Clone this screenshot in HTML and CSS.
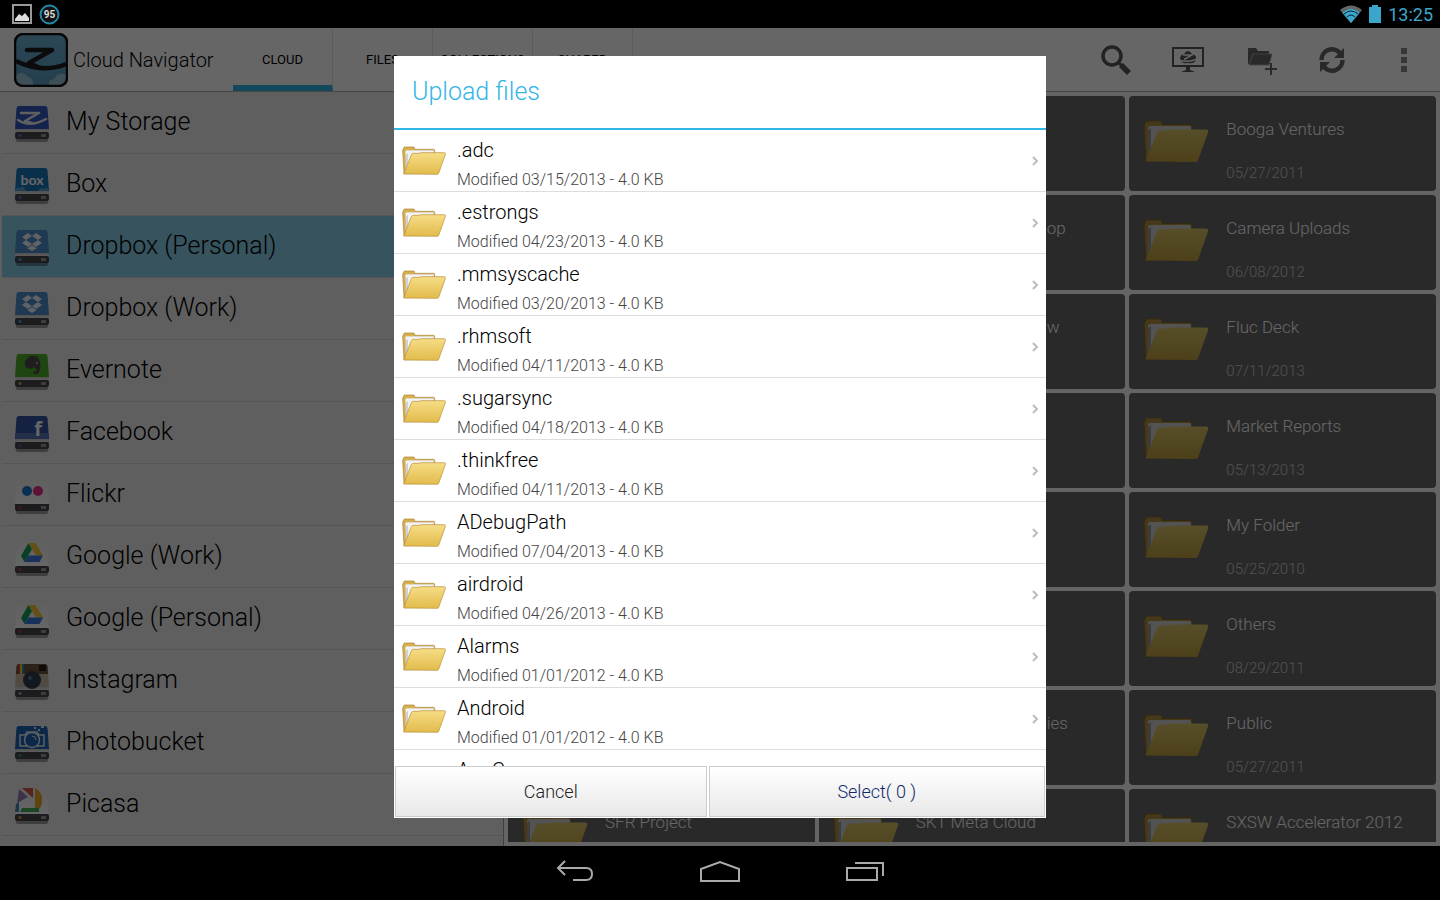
FILE: index.html
```
<!DOCTYPE html>
<html lang="en">
<head>
    <meta charset="utf-8">
    <title>Cloud Navigator</title>
    <link rel="stylesheet" href="styles.css">
</head>
<body>
    <!-- shared icons -->
    <svg class="defs" aria-hidden="true">
        <defs>
            <linearGradient id="gold" x1="0" y1="0" x2="0" y2="1">
                <stop offset="0" stop-color="#f6dd85"/>
                <stop offset="1" stop-color="#e2bb4c"/>
            </linearGradient>
            <linearGradient id="goldDeep" x1="0" y1="0" x2="0" y2="1">
                <stop offset="0" stop-color="#d8c468"/>
                <stop offset="1" stop-color="#c0a040"/>
            </linearGradient>
            <linearGradient id="appSky" x1="0" y1="0" x2="0" y2="1">
                <stop offset="0" stop-color="#6cb0d4"/>
                <stop offset="1" stop-color="#5a9cc0"/>
            </linearGradient>
            <linearGradient id="plate" x1="0" y1="0" x2="0" y2="1">
                <stop offset="0" stop-color="#bbb"/>
                <stop offset="1" stop-color="#f4f4f4"/>
            </linearGradient>
            <linearGradient id="white" x1="0" y1="0" x2="0" y2="1">
                <stop offset="0" stop-color="#eee"/>
                <stop offset="1" stop-color="#fff"/>
            </linearGradient>
            <symbol id="folder" viewBox="0 0 66 44">
                <path d="M1 6 L3 1.500 Q3.500 1 4.500 1 H17 Q19 1 19 3 V4.500 H47 Q49 4.500 49 6.500 V12 L12 41 H3 Z" fill="#d6ae4c" stroke="#a98432" stroke-width="1"/>
                <path d="M5 8 Q5 6 7 6 H46 Q48 6 48 8 V14 L7 38 Z" fill="#f4f4f6" stroke="#c9c3b4" stroke-width=".6"/>
                <path d="M6 12 L9 10 V30 L5 40 Z" fill="#cfcfd6"/>
                <path d="M2.500 41.500 L14 12.500 Q15 10.500 17 10.500 H26 L28 9.500 H63 Q66 9.500 65 12.500 L55 40.500 Q54.500 42 53 42 Z" fill="url(#gold)" stroke="#b58d35" stroke-width="1"/>
            </symbol>
            <symbol id="folderTile" viewBox="0 0 66 44">
                <path d="M1 6 L3 1.500 Q3.500 1 4.500 1 H17 Q19 1 19 3 V4.500 H47 Q49 4.500 49 6.500 V12 L12 41 H3 Z" fill="#b09040" stroke="#80662a" stroke-width="1"/>
                <path d="M5 8 Q5 6 7 6 H46 Q48 6 48 8 V14 L7 38 Z" fill="#cfcfd2"/>
                <path d="M5 10 L8 8 V30 L5 38 Z" fill="#98989c"/>
                <path d="M2.500 41.500 L14 12.500 Q15 10.500 17 10.500 H26 L28 9.500 H63 Q66 9.500 65 12.500 L55 40.500 Q54.500 42 53 42 Z" fill="url(#goldDeep)"/>
            </symbol>
            <symbol id="base" viewBox="0 0 36 40">
                <rect x="2" y="32" width="32" height="5" rx="2" fill="#000" opacity=".35"/>
                <path d="M1 22 H35 V29 H1 Z" fill="url(#plate)"/>
                <rect x="1" y="27" width="34" height="7" rx="2" fill="#48484c"/>
                <rect x="27" y="29" width="5" height="3" fill="#999"/>
                <circle cx="6" cy="30.500" r="1.500" fill="currentColor"/>
            </symbol>
            <symbol id="cover" viewBox="0 0 36 40">
                <path d="M5 1 H31 Q33 1 33.500 3 L35 24 H1 L2.500 3 Q3 1 5 1 Z" fill="currentColor"/>
            </symbol>
            <symbol id="coverWhite" viewBox="0 0 36 40">
                <path d="M5 1 H31 Q33 1 33.500 3 L35 27 H1 L2.500 3 Q3 1 5 1 Z" fill="url(#white)"/>
            </symbol>
            <symbol id="chevron" viewBox="0 0 8 10">
                <path d="M2 1 L6 5 L2 9" fill="none" stroke="#bcbcbc" stroke-width="2"/>
            </symbol>
            <symbol id="dropboxMark" viewBox="0 0 20 18">
                <path d="M6 0 L10 3 L4 7 L0 4 Z M14 0 L20 4 L16 7 L10 3 Z M0 10 L4 7 L10 11 L6 14 Z M20 10 L16 7 L10 11 L14 14 Z M4 14.500 L6 15 L10 12 L14 15 L16 14.500 L10 18 Z" fill="#f2f6fa"/>
            </symbol>
            <symbol id="driveMark" viewBox="0 0 22 19">
                <path d="M7.500 0 L0 13 L3.500 19 L11 6 Z" fill="#18a05c"/>
                <path d="M7.500 0 H14.500 L22 12.500 H15 Z" fill="#fbc934"/>
                <path d="M7.500 12.500 H22 L18.500 19 H3.500 Z" fill="#3b78e7"/>
            </symbol>
        </defs>
    </svg>

    <div class="statusbar">
        <svg width="20" height="20" viewBox="0 0 20 20">
            <rect x="1" y="1" width="18" height="18" fill="none" stroke="#999" stroke-width="2"/>
            <path d="M3 15 L7 10 L10 12 L13 9 L17 14 V17 H3 Z" fill="#ddd"/>
        </svg>
        <svg width="21" height="21" viewBox="0 0 21 21">
            <circle cx="10.500" cy="10.500" r="9" fill="#111" stroke="#2389a8" stroke-width="2"/>
            <text x="10.500" y="14" text-anchor="middle" class="badge-text">95</text>
        </svg>
        <svg class="wifi" width="22" height="18" viewBox="0 0 22 18">
            <path d="M11 18 L0 5 Q11 -4 22 5 Z" fill="#666"/>
            <path d="M11 18 L2.500 8 Q11 0 19.500 8 Z" fill="#3ba6cc"/>
            <path d="M4 9 Q11 3 18 9 M7 12 Q11 8 15 12" fill="none" stroke="#123" stroke-width="1"/>
        </svg>
        <svg width="12" height="18" viewBox="0 0 12 18">
            <path d="M3 0 H9 V2 H12 V18 H0 V2 H3 Z" fill="#3ba6cc"/>
        </svg>
        <span class="clock">13:25</span>
    </div>

    <main class="app">
        <header class="actionbar">
            <svg class="logo" width="54" height="54" viewBox="0 0 54 54">
                <rect x="1" y="1" width="52" height="52" rx="8" fill="url(#appSky)"/>
                <path d="M2 52 V42 Q9 37 14 44 Q19 44 19 52 Z M35 52 Q34 46 40 46 Q44 38 52 42 V52 Z" fill="#9fc6da"/>
                <path d="M2 28 Q14 34 27 35 Q41 36 52 31" fill="none" stroke="#1c1c20" stroke-width="4.500"/>
                <path d="M13 17 H38 L15 30 L26 35" fill="none" stroke="#1c1c20" stroke-width="4.500" stroke-linecap="round" stroke-linejoin="round"/>
                <rect x="1" y="1" width="52" height="52" rx="8" fill="none" stroke="#111" stroke-width="2.500"/>
            </svg>
            <h1>Cloud Navigator</h1>
            <nav class="tabs">
                <a href="#" class="active">CLOUD</a>
                <a href="#">FILES</a>
                <a href="#">COLLECTIONS</a>
                <a href="#">SHARED</a>
            </nav>
            <div class="actions">
                <button type="button" aria-label="Search">
                    <svg width="32" height="32" viewBox="0 0 32 32">
                        <circle cx="12" cy="12" r="9" fill="none" stroke="#555" stroke-width="3.500"/>
                        <path d="M18 18 L22 22" stroke="#555" stroke-width="3"/>
                        <path d="M21 21 L29 29" stroke="#555" stroke-width="5.500"/>
                    </svg>
                </button>
                <button type="button" aria-label="Remote screen">
                    <svg width="32" height="28" viewBox="0 0 32 28">
                        <path d="M1 2 H31 V20 H1 Z" fill="none" stroke="#555" stroke-width="2"/>
                        <path d="M14 21 H18 V24 L23 26 H9 L14 24 Z" fill="#555"/>
                        <path d="M8 13 Q8 9 12 8 Q16 2 20 8 Q25 9 24 14 Q22 18 16 17 Q9 18 8 13 Z" fill="#555"/>
                        <path d="M11 9 H20 L12 13.500 M7 14 Q16 17 25 13" fill="none" stroke="#fff" stroke-width="1.500"/>
                    </svg>
                </button>
                <button type="button" aria-label="New folder">
                    <svg width="34" height="32" viewBox="-3 0 34 32">
                        <path d="M2 20 V4 H10 L12 7 H23 V10 H7 L3 20 Z" fill="#666"/>
                        <path d="M7 10 H26 L23 21 H3 Z" fill="#666" stroke="#aaa" stroke-width=".8"/>
                        <path d="M25 19 V31 M19 25 H31" stroke="#666" stroke-width="2"/>
                    </svg>
                </button>
                <button type="button" aria-label="Refresh">
                    <svg width="28" height="28" viewBox="0 0 28 28">
                        <path d="M3.500 14 A10.500 10.500 0 0 1 22 7 M24.500 14 A10.500 10.500 0 0 1 6 21" fill="none" stroke="#666" stroke-width="4.500"/>
                        <path d="M26 2 V12 H16 Z M2 26 V16 H12 Z" fill="#666"/>
                    </svg>
                </button>
                <button type="button" aria-label="More options">
                    <svg width="6" height="24" viewBox="0 0 6 24">
                        <path d="M0 0 H6 V6 H0 Z M0 9 H6 V15 H0 Z M0 18 H6 V24 H0 Z" fill="#888"/>
                    </svg>
                </button>
            </div>
        </header>

        <div class="content">
            <ul class="drives">
                <li><a href="#">
                    <svg width="36" height="40" viewBox="0 0 36 40">
                        <use href="#base" color="#4a78d8"/><use href="#cover" color="#3457c4"/>
                        <path d="M7 8 H25 L11 16 L18 18 M4 15 Q16 23 32 14" fill="none" stroke="#eee" stroke-width="2.500" stroke-linecap="round" stroke-linejoin="round"/>
                    </svg>My Storage</a></li>
                <li><a href="#">
                    <svg width="36" height="40" viewBox="0 0 36 40">
                        <use href="#base" color="#4a78d8"/><use href="#cover" color="#1b76b8"/>
                        <path d="M1 24 Q2 19 6 21 Q9 17 12 24 Z M24 24 Q27 19 30 22 Q33 18 35 24 Z" fill="#58a4d4"/>
                        <text x="18" y="18" text-anchor="middle" class="box-text">box</text>
                    </svg>Box</a></li>
                <li class="selected"><a href="#">
                    <svg width="36" height="40" viewBox="0 0 36 40">
                        <use href="#base" color="#5a9ce0"/><use href="#cover" color="#4d8ecb"/>
                        <use href="#dropboxMark" x="8" y="4" width="20" height="18"/>
                    </svg>Dropbox (Personal)</a></li>
                <li><a href="#">
                    <svg width="36" height="40" viewBox="0 0 36 40">
                        <use href="#base" color="#5a9ce0"/><use href="#cover" color="#4d8ecb"/>
                        <use href="#dropboxMark" x="8" y="4" width="20" height="18"/>
                    </svg>Dropbox (Work)</a></li>
                <li><a href="#">
                    <svg width="36" height="40" viewBox="0 0 36 40">
                        <use href="#base" color="#b8b840"/><use href="#cover" color="#4fae2c"/>
                        <path d="M11 8 L16 3 Q23 2 25 6 Q28 12 25 19 Q24 22 21 21 Q18 20 20 18 L22 19 Q23 15 20 14 Q18 17 13 15 Q10 13 11 8 Z" fill="#4c4c4c"/>
                        <circle cx="23" cy="10" r="1" fill="#bbb"/>
                    </svg>Evernote</a></li>
                <li><a href="#">
                    <svg width="36" height="40" viewBox="0 0 36 40">
                        <use href="#base" color="#3a68b8"/><use href="#cover" color="#3454a4"/>
                        <path d="M1.500 18 H34.500 L35 24 H1 Z" fill="#5874b8"/>
                        <text x="24" y="21" text-anchor="middle" class="fb-text">f</text>
                    </svg>Facebook</a></li>
                <li><a href="#">
                    <svg width="36" height="40" viewBox="0 0 36 40">
                        <use href="#base" color="#d03050"/><use href="#coverWhite"/>
                        <rect x="1" y="27" width="34" height="2" fill="#48484c"/>
                        <circle cx="13" cy="14" r="5" fill="#1878c8"/>
                        <circle cx="24" cy="14" r="5" fill="#e8308c"/>
                    </svg>Flickr</a></li>
                <li><a href="#">
                    <svg width="36" height="40" viewBox="0 0 36 40">
                        <use href="#base" color="#c83848"/><use href="#coverWhite"/>
                        <use href="#driveMark" x="7" y="4" width="22" height="19"/>
                    </svg>Google (Work)</a></li>
                <li><a href="#">
                    <svg width="36" height="40" viewBox="0 0 36 40">
                        <use href="#base" color="#c83848"/><use href="#coverWhite"/>
                        <use href="#driveMark" x="7" y="4" width="22" height="19"/>
                    </svg>Google (Personal)</a></li>
                <li><a href="#">
                    <svg width="36" height="40" viewBox="0 0 36 40">
                        <use href="#base" color="#aaa"/><use href="#cover" color="#c9bba8"/>
                        <path d="M5 1 H31 Q33 1 33.500 3 L34 11 H2 L2.500 3 Q3 1 5 1 Z" fill="#6f5141"/>
                        <path d="M4 1 H6 V11 H4 Z" fill="#c33"/><path d="M6 1 H8 V11 H6 Z" fill="#dc3"/><path d="M8 1 H10 V11 H8 Z" fill="#38a"/>
                        <rect x="25" y="2" width="7" height="6" rx="1" fill="#2a1c1c"/>
                        <circle cx="18" cy="17" r="9" fill="#333a44"/>
                        <circle cx="18" cy="17" r="5" fill="#26405a"/>
                        <circle cx="16" cy="15" r="2" fill="#607890"/>
                    </svg>Instagram</a></li>
                <li><a href="#">
                    <svg width="36" height="40" viewBox="0 0 36 40">
                        <use href="#base" color="#38906a"/><use href="#cover" color="#1c64b4"/>
                        <path d="M6 10 H11 L13 7 H23 L25 10 H30 V21 H6 Z" fill="none" stroke="#e8eef6" stroke-width="1.500"/>
                        <circle cx="18" cy="15" r="7.500" fill="#1c64b4" stroke="#e8eef6" stroke-width="1.500"/>
                        <path d="M18 11 Q22 11 22 15" fill="none" stroke="#e8eef6" stroke-width="1"/>
                        <path d="M20 2 H22 V4 H20 Z M27 1 H30 V3 H27 Z M24 4 H26 V6 H24 Z" fill="#e8eef6"/>
                    </svg>Photobucket</a></li>
                <li><a href="#">
                    <svg width="36" height="40" viewBox="0 0 36 40">
                        <use href="#base" color="#d0a030"/><use href="#coverWhite"/>
                        <path d="M8 1 H19 V11 Z" fill="#d4584c"/>
                        <path d="M5 2 L14 10 L3 16 Z" fill="#9a80b4"/>
                        <path d="M21 1 Q29 5 28 14 Q28 20 23 24 L21 20 Z" fill="#eda828"/>
                        <path d="M6 25 L8 21 H25 V25 Z" fill="#3fae58"/>
                        <path d="M2 17 L5 15 V25 H1 Z" fill="#4088b8"/>
                    </svg>Picasa</a></li>
                <li></li>
            </ul>

            <!-- three columns, row by row -->
            <div class="tiles">
                <div class="tile"></div>
                <div class="tile"></div>
                <a href="#" class="tile"><svg><use href="#folderTile"/></svg><span class="name">Booga Ventures</span><span class="date">05/27/2011</span></a>
                <div class="tile"></div>
                <a href="#" class="tile tail"><span class="name">op</span></a>
                <a href="#" class="tile"><svg><use href="#folderTile"/></svg><span class="name">Camera Uploads</span><span class="date">06/08/2012</span></a>
                <div class="tile"></div>
                <a href="#" class="tile tail"><span class="name">w</span></a>
                <a href="#" class="tile"><svg><use href="#folderTile"/></svg><span class="name">Fluc Deck</span><span class="date">07/11/2013</span></a>
                <div class="tile"></div>
                <div class="tile"></div>
                <a href="#" class="tile"><svg><use href="#folderTile"/></svg><span class="name">Market Reports</span><span class="date">05/13/2013</span></a>
                <div class="tile"></div>
                <div class="tile"></div>
                <a href="#" class="tile"><svg><use href="#folderTile"/></svg><span class="name">My Folder</span><span class="date">05/25/2010</span></a>
                <div class="tile"></div>
                <div class="tile"></div>
                <a href="#" class="tile"><svg><use href="#folderTile"/></svg><span class="name">Others</span><span class="date">08/29/2011</span></a>
                <div class="tile"></div>
                <a href="#" class="tile tail"><span class="name">ies</span></a>
                <a href="#" class="tile"><svg><use href="#folderTile"/></svg><span class="name">Public</span><span class="date">05/27/2011</span></a>
                <a href="#" class="tile"><svg><use href="#folderTile"/></svg><span class="name">SFR Project</span></a>
                <a href="#" class="tile"><svg><use href="#folderTile"/></svg><span class="name">SKT Meta Cloud</span></a>
                <a href="#" class="tile"><svg><use href="#folderTile"/></svg><span class="name">SXSW Accelerator 2012</span></a>
            </div>
        </div>

        <div class="scrim">
            <div class="dialog" role="dialog" aria-labelledby="dialog-title">
                <h2 id="dialog-title">Upload files</h2>
                <ul class="files">
                    <li><a href="#"><svg class="folder"><use href="#folder"/></svg><span class="info"><b>.adc</b><small>Modified 03/15/2013 - 4.0 KB</small></span><svg class="chevron"><use href="#chevron"/></svg></a></li>
                    <li><a href="#"><svg class="folder"><use href="#folder"/></svg><span class="info"><b>.estrongs</b><small>Modified 04/23/2013 - 4.0 KB</small></span><svg class="chevron"><use href="#chevron"/></svg></a></li>
                    <li><a href="#"><svg class="folder"><use href="#folder"/></svg><span class="info"><b>.mmsyscache</b><small>Modified 03/20/2013 - 4.0 KB</small></span><svg class="chevron"><use href="#chevron"/></svg></a></li>
                    <li><a href="#"><svg class="folder"><use href="#folder"/></svg><span class="info"><b>.rhmsoft</b><small>Modified 04/11/2013 - 4.0 KB</small></span><svg class="chevron"><use href="#chevron"/></svg></a></li>
                    <li><a href="#"><svg class="folder"><use href="#folder"/></svg><span class="info"><b>.sugarsync</b><small>Modified 04/18/2013 - 4.0 KB</small></span><svg class="chevron"><use href="#chevron"/></svg></a></li>
                    <li><a href="#"><svg class="folder"><use href="#folder"/></svg><span class="info"><b>.thinkfree</b><small>Modified 04/11/2013 - 4.0 KB</small></span><svg class="chevron"><use href="#chevron"/></svg></a></li>
                    <li><a href="#"><svg class="folder"><use href="#folder"/></svg><span class="info"><b>ADebugPath</b><small>Modified 07/04/2013 - 4.0 KB</small></span><svg class="chevron"><use href="#chevron"/></svg></a></li>
                    <li><a href="#"><svg class="folder"><use href="#folder"/></svg><span class="info"><b>airdroid</b><small>Modified 04/26/2013 - 4.0 KB</small></span><svg class="chevron"><use href="#chevron"/></svg></a></li>
                    <li><a href="#"><svg class="folder"><use href="#folder"/></svg><span class="info"><b>Alarms</b><small>Modified 01/01/2012 - 4.0 KB</small></span><svg class="chevron"><use href="#chevron"/></svg></a></li>
                    <li><a href="#"><svg class="folder"><use href="#folder"/></svg><span class="info"><b>Android</b><small>Modified 01/01/2012 - 4.0 KB</small></span><svg class="chevron"><use href="#chevron"/></svg></a></li>
                    <li><a href="#"><svg class="folder"><use href="#folder"/></svg><span class="info"><b>AppGame</b></span></a></li>
                </ul>
                <div class="buttons">
                    <button type="button">Cancel</button>
                    <button type="button" class="select">Select( 0 )</button>
                </div>
            </div>
        </div>
    </main>

    <div class="navbar">
        <button type="button" aria-label="Back">
            <svg width="38" height="22" viewBox="0 0 38 22">
                <path d="M9 1 L2 8 L9 15 M2 8 H30 Q36 8 36 14 Q36 20 30 20 H17" fill="none" stroke="#aaa" stroke-width="2"/>
            </svg>
        </button>
        <button type="button" aria-label="Home">
            <svg width="42" height="22" viewBox="0 0 42 22">
                <path d="M2 21 V9 L21 2 L40 9 V21 Z" fill="none" stroke="#aaa" stroke-width="2"/>
            </svg>
        </button>
        <button type="button" aria-label="Recent apps">
            <svg width="38" height="20" viewBox="0 0 38 20">
                <path d="M1 7 H31 V19 H1 Z M9 2 H37 V15" fill="none" stroke="#aaa" stroke-width="2"/>
            </svg>
        </button>
    </div>
</body>
</html>
```
FILE: styles.css
```
*{
    box-sizing:border-box;
}
body{
    display:flex;
    flex-direction:column;
    height:100vh;
    margin:0;
    overflow:hidden;
    font-family:Roboto, sans-serif;
    font-weight:300;
    color:#000;
    background-color:#000;
}
ul{
    margin:0;
    padding:0;
    list-style:none;
}
a{
    color:inherit;
    text-decoration:none;
}
button{
    padding:0;
    border:0;
    background:none;
    font:inherit;
}
.defs{
    position:absolute;
    width:0;
    height:0;
}

/* status bar */
.statusbar{
    display:flex;
    flex:none;
    align-items:center;
    gap:7px;
    height:28px;
    padding:0 7px 0 12px;
}
.badge-text{
    font-size:10px;
    font-weight:700;
    fill:#ddd;
}
.wifi{
    margin-left:auto;
}
.clock{
    font-size:18px;
    font-weight:400;
    color:#3ba6cc;
}

/* app */
.app{
    position:relative;
    display:flex;
    flex:1;
    flex-direction:column;
    min-height:0;
}
.actionbar{
    display:flex;
    flex:none;
    align-items:center;
    height:64px;
    padding-left:14px;
    border-bottom:1px solid #b0b0b0;
    background-color:#fff;
}
h1{
    width:160px;
    margin:0 0 0 5px;
    font-size:20px;
    font-weight:300;
    white-space:nowrap;
}
.tabs{
    display:flex;
    align-self:stretch;
}
.tabs a{
    width:100px;
    border-right:1px solid #e4e4e4;
    border-bottom:6px solid transparent;
    font-size:13px;
    font-weight:400;
    line-height:64px;
    text-align:center;
}
.tabs .active{
    border-bottom-color:#33b5e5;
}
.actions{
    display:flex;
    margin-left:auto;
}
.actions button{
    display:flex;
    align-items:center;
    justify-content:center;
    width:72px;
    height:63px;
}
.content{
    display:flex;
    flex:1;
    min-height:0;
}
.drives{
    width:35%;
    overflow:hidden;
    border-right:1px solid #a0a0a0;
    background-color:#eee;
}
.drives li{
    height:62px;
    margin-left:2px;
    border-bottom:1px solid #d4d4d4;
}
.drives a{
    display:flex;
    align-items:center;
    gap:16px;
    height:100%;
    padding:0 0 2px 12px;
    font-size:25px;
}
.drives svg{
    margin-top:6px;
}
.drives .selected{
    background-color:#89d0ea;
}
.box-text{
    font-family:Lato, sans-serif;
    font-size:14px;
    font-weight:700;
    fill:#fff;
}
.fb-text{
    font-family:"Open Sans", sans-serif;
    font-size:20px;
    font-weight:700;
    fill:#fff;
}
.tiles{
    display:grid;
    flex:1;
    grid-template-columns:repeat(3, 1fr);
    grid-auto-rows:95px;
    gap:4px;
    overflow:hidden;
    padding:4px 4px 0;
    border-bottom:4px solid #fafafa;
    background-color:#fafafa;
}
.tile{
    display:grid;
    grid-template-columns:65px 1fr;
    grid-template-rows:44px 1fr;
    column-gap:18px;
    padding:11px 14px;
    border-radius:4px;
    font-size:17px;
    color:#fff;
    background-color:#676767;
}
.tile svg{
    grid-row:span 2;
    width:66px;
    height:44px;
    margin-top:13px;
}
.name{
    line-height:44px;
    white-space:nowrap;
}
.date{
    font-size:15px;
    line-height:44px;
    color:#ccc;
}
.tail{
    grid-template-columns:196px 1fr;
}
.tail .name{
    grid-column:2;
}

/* upload dialog */
.scrim{
    position:absolute;
    inset:0;
    display:flex;
    align-items:center;
    justify-content:center;
    background-color:rgba(0,0,0,.6);
}
.dialog{
    display:flex;
    flex-direction:column;
    width:90%;
    max-width:652px;
    height:calc(100% - 56px);
    background-color:#fff;
}
h2{
    flex:none;
    margin:0;
    padding-left:18px;
    border-bottom:2px solid #33b5e5;
    font-size:25px;
    font-weight:300;
    line-height:72px;
    color:#33b5e5;
}
.files{
    flex:1;
    overflow:hidden;
}
.files a{
    display:flex;
    align-items:center;
    height:62px;
    padding:0 7px 0 8px;
    border-bottom:1px solid #ddd;
}
.folder{
    width:44px;
    height:30px;
    margin-right:11px;
}
.info{
    flex:1;
    align-self:flex-start;
}
.info b{
    display:block;
    padding-top:4px;
    font-size:20px;
    font-weight:300;
    line-height:32px;
}
.info small{
    display:block;
    padding-top:2px;
    font-size:16px;
    line-height:24px;
    color:#444;
}
.chevron{
    width:8px;
    height:10px;
}
.buttons{
    display:flex;
    flex:none;
    gap:2px;
    padding:0 1px 1px;
}
.buttons button{
    flex:1 1 auto;
    height:51px;
    border:1px solid #ccc;
    font-size:18px;
    color:#222;
    background:linear-gradient(#fff, #e8e8e8);
}
.buttons .select{
    color:#0f2a6b;
}

/* system buttons */
.navbar{
    display:flex;
    flex:none;
    justify-content:center;
    height:54px;
}
.navbar button{
    width:145px;
}
```
